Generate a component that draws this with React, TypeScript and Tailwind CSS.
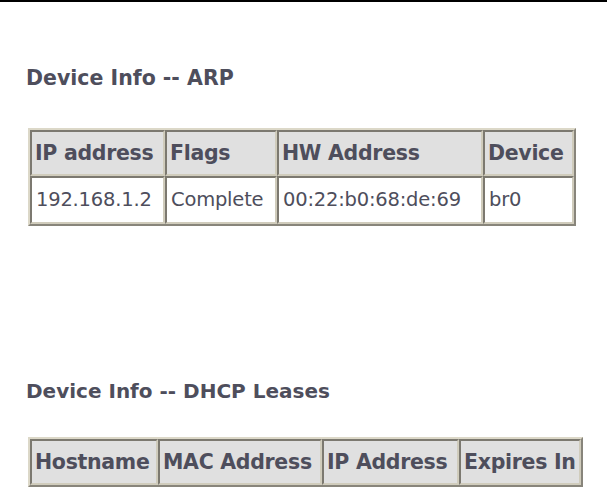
import React from "react";

const font = { fontFamily: '"DejaVu Sans", Verdana, sans-serif' };

function Th({ children, w }: { children: React.ReactNode; w: string }) {
  return (
    <th
      className={`${w} h-[46px] bg-[#e0e0e0] border-2 border-[#d0ccbc] [border-style:inset] pl-[3px] pr-[2px] text-left font-bold text-[20.5px] tracking-[-0.3px] text-[#4e4e5c] whitespace-nowrap`}
    >
      {children}
    </th>
  );
}

function Td({ children }: { children: React.ReactNode }) {
  return (
    <td className="h-[48px] bg-white border-2 border-[#d0ccbc] [border-style:inset] pl-[4px] pr-[2px] text-left text-[19.5px] tracking-[-0.2px] text-[#4e4e5c] whitespace-nowrap">
      {children}
    </td>
  );
}

export default function App() {
  return (
    <div className="w-[607px] h-[493px] overflow-hidden bg-white" style={font}>
      <div className="h-[2px] bg-black" />
      <div className="pl-[26px] pt-[64px]">
        <div className="font-bold text-[20.5px] tracking-[0px] text-[#4e4e5c] leading-[24px] whitespace-nowrap">Device Info -- ARP</div>
        <table className="mt-[38px] ml-[2px] table-fixed border-separate border-spacing-0 border-2 border-[#dcd8c8] [border-style:outset]">
          <thead>
            <tr>
              <Th w="w-[135px]">IP address</Th>
              <Th w="w-[112px]">Flags</Th>
              <Th w="w-[206px]">HW Address</Th>
              <Th w="w-[91px]">Device</Th>
            </tr>
          </thead>
          <tbody>
            <tr>
              <Td>192.168.1.2</Td>
              <Td>Complete</Td>
              <Td>00:22:b0:68:de:69</Td>
              <Td>br0</Td>
            </tr>
          </tbody>
        </table>
        <div className="mt-[153px] font-bold text-[20px] tracking-[0px] text-[#4e4e5c] leading-[24px] whitespace-nowrap">Device Info -- DHCP Leases</div>
        <table className="mt-[34px] ml-[2px] table-fixed border-separate border-spacing-0 border-2 border-[#dcd8c8] [border-style:outset]">
          <thead>
            <tr>
              <Th w="w-[128px]">Hostname</Th>
              <Th w="w-[164px]">MAC Address</Th>
              <Th w="w-[137px]">IP Address</Th>
              <Th w="w-[122px]">Expires In</Th>
            </tr>
          </thead>
        </table>
      </div>
    </div>
  );
}
